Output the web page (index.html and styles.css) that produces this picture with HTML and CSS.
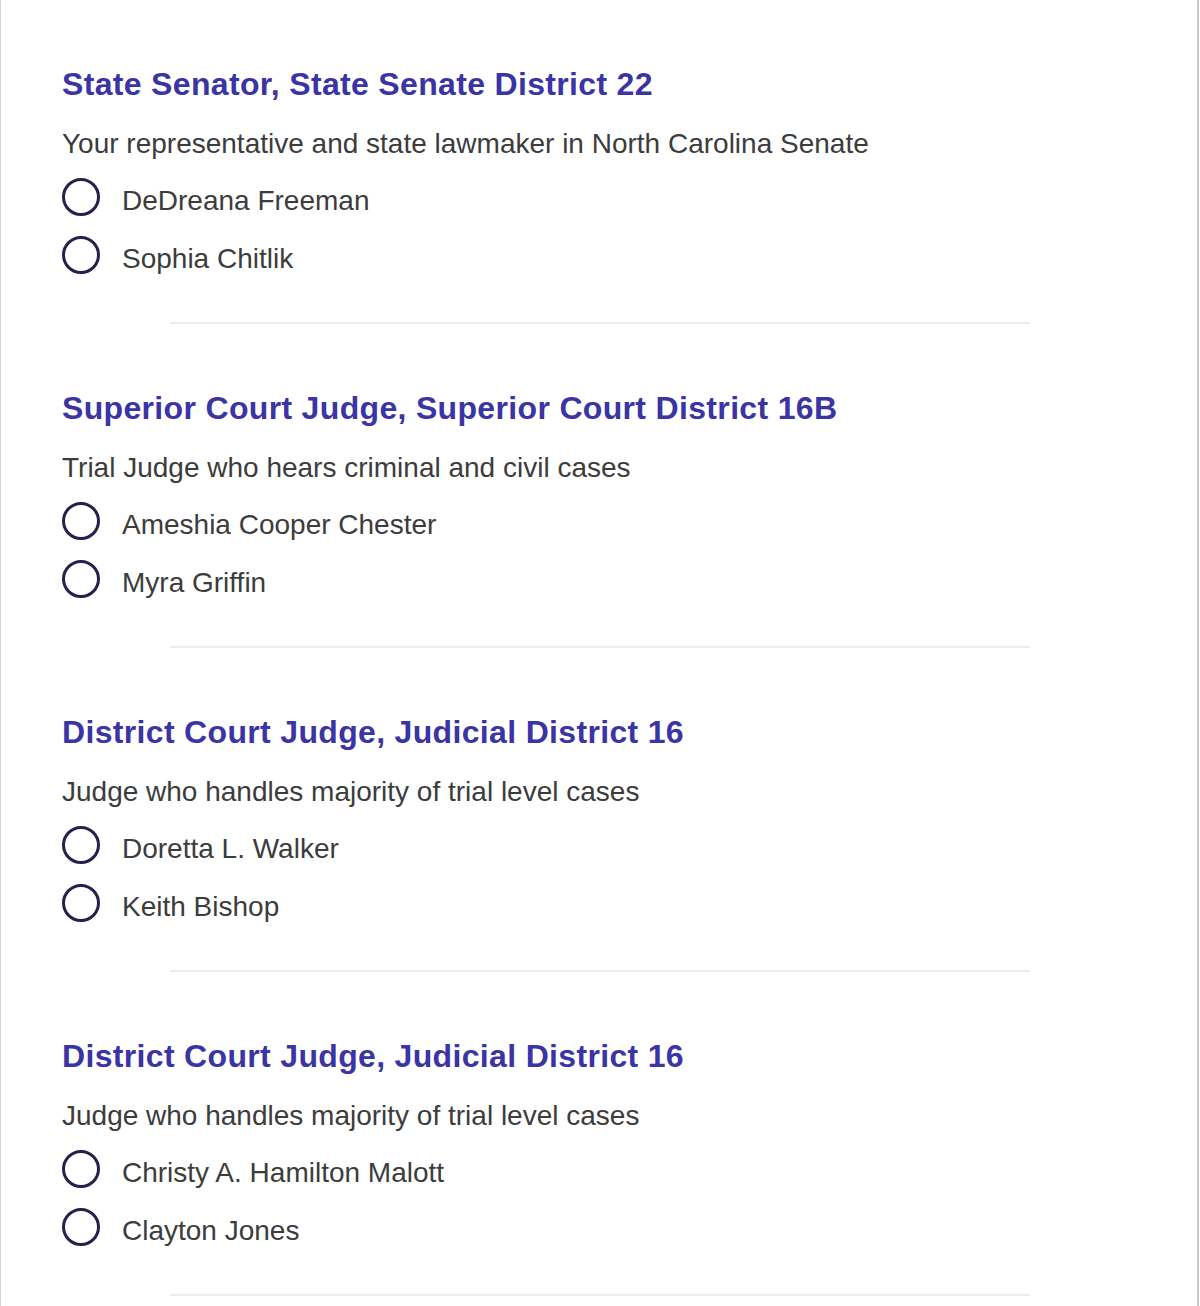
FILE: index.html
```html
<!DOCTYPE html>
<html lang="en">
<head>
<meta charset="utf-8">
<title>Ballot</title>
<link rel="stylesheet" href="styles.css">
</head>
<body>
<main class="page">
  <section class="race">
    <h2 class="race-title">State Senator, State Senate District 22</h2>
    <p class="race-desc">Your representative and state lawmaker in North Carolina Senate</p>
    <ul class="options">
      <li class="option"><span class="radio"></span><span class="name">DeDreana Freeman</span></li>
      <li class="option"><span class="radio"></span><span class="name">Sophia Chitlik</span></li>
    </ul>
    <hr class="sep">
  </section>
  <section class="race">
    <h2 class="race-title">Superior Court Judge, Superior Court District 16B</h2>
    <p class="race-desc">Trial Judge who hears criminal and civil cases</p>
    <ul class="options">
      <li class="option"><span class="radio"></span><span class="name">Ameshia Cooper Chester</span></li>
      <li class="option"><span class="radio"></span><span class="name">Myra Griffin</span></li>
    </ul>
    <hr class="sep">
  </section>
  <section class="race">
    <h2 class="race-title">District Court Judge, Judicial District 16</h2>
    <p class="race-desc">Judge who handles majority of trial level cases</p>
    <ul class="options">
      <li class="option"><span class="radio"></span><span class="name">Doretta L. Walker</span></li>
      <li class="option"><span class="radio"></span><span class="name">Keith Bishop</span></li>
    </ul>
    <hr class="sep">
  </section>
  <section class="race">
    <h2 class="race-title">District Court Judge, Judicial District 16</h2>
    <p class="race-desc">Judge who handles majority of trial level cases</p>
    <ul class="options">
      <li class="option"><span class="radio"></span><span class="name">Christy A. Hamilton Malott</span></li>
      <li class="option"><span class="radio"></span><span class="name">Clayton Jones</span></li>
    </ul>
    <hr class="sep">
  </section>
</main>
</body>
</html>
```
FILE: styles.css
```css
html, body {
  margin: 0;
  padding: 0;
  background: #ffffff;
}
body {
  font-family: "Liberation Sans", Arial, Helvetica, sans-serif;
  color: #3c3c3c;
}
.page {
  box-sizing: border-box;
  width: 1199px;
  min-height: 1306px;
  border-left: 1px solid #d6d6d6;
  border-right: 2px solid #c9c9c9;
  padding: 0 0 0 61px;
}
.race {
  padding-top: 64px;
}
.race-title {
  margin: 0;
  font-size: 32px;
  line-height: 40px;
  font-weight: bold;
  letter-spacing: 0.33px;
  color: #3a34a4;
}
.race-desc {
  margin: 22px 0 0;
  font-size: 28px;
  line-height: 36px;
}
.options {
  list-style: none;
  margin: 16px 0 0;
  padding: 0;
  display: flex;
  flex-direction: column;
  gap: 20px;
}
.option {
  display: flex;
  align-items: center;
  gap: 22px;
  height: 38px;
}
.radio {
  box-sizing: border-box;
  width: 38px;
  height: 38px;
  border: 3px solid #24214c;
  border-radius: 50%;
  flex: none;
}
.name {
  font-size: 28px;
  line-height: 38px;
  padding-top: 8px;
}
.sep {
  margin: 48px 0 0 108px;
  width: 860px;
  height: 2px;
  border: 0;
  background: #ededed;
}
```
